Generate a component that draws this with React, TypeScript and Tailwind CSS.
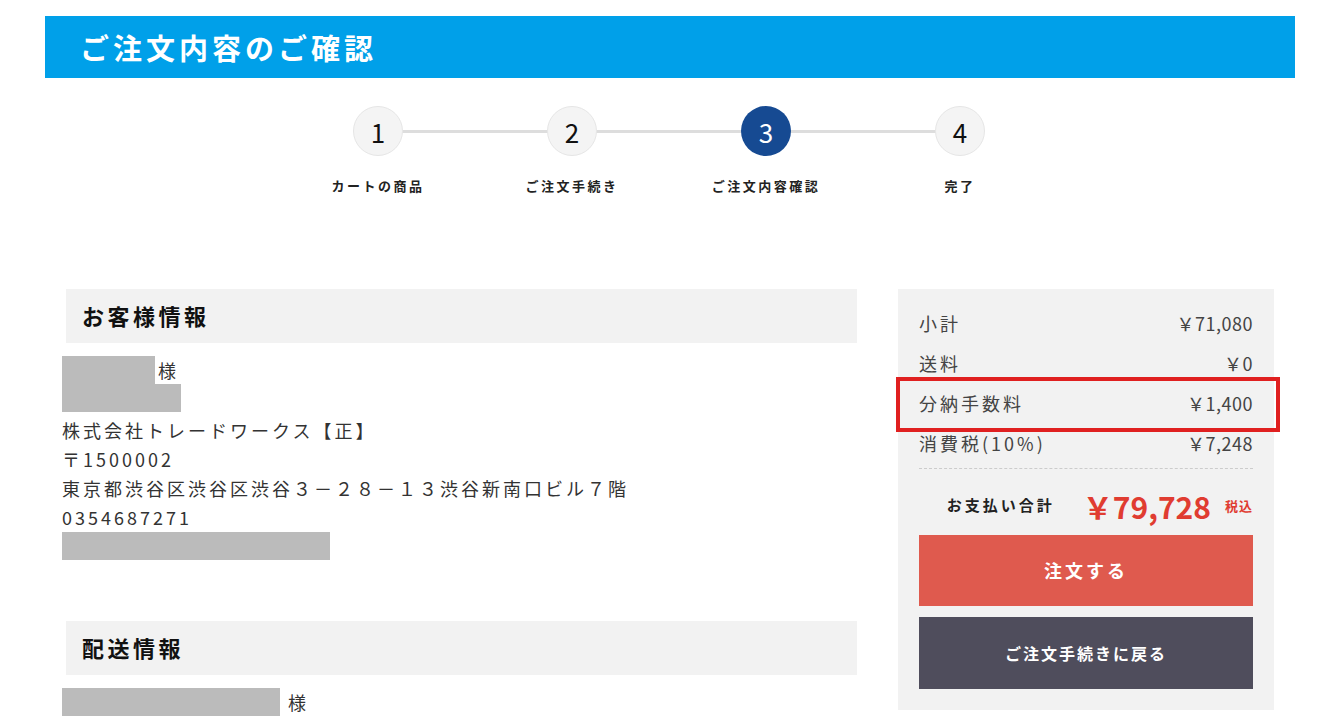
const jp = "font-['Noto_Sans_CJK_JP','Noto_Sans',sans-serif]"

const steps = [
  { n: '1', label: 'カートの商品' },
  { n: '2', label: 'ご注文手続き' },
  { n: '3', label: 'ご注文内容確認', active: true },
  { n: '4', label: '完了' },
]

const rows = [
  { label: '小計', value: '￥71,080' },
  { label: '送料', value: '￥0' },
  { label: '分納手数料', value: '￥1,400' },
  { label: '消費税(10%)', value: '￥7,248' },
]

function Redact({ w }: { w: string }) {
  return <div className={`h-[28px] shrink-0 bg-[#bbbbbb] ${w}`} />
}

function SectionHead({ title }: { title: string }) {
  return (
    <div className="ml-[4px] flex h-[54px] items-center bg-[#f2f2f2] pl-[16px]">
      <h2 className="text-[22px] font-bold tracking-[3.5px] text-[#111]">{title}</h2>
    </div>
  )
}

export default function App() {
  return (
    <div className={`min-h-screen bg-white pt-[16px] text-[#333] ${jp}`}>
      {/* Title bar */}
      <div className="mx-[45px] flex h-[62px] items-center bg-[#00a0e9] pl-[35px]">
        <h1 className="text-[29px] font-bold leading-none tracking-[4px] text-white">ご注文内容のご確認</h1>
      </div>

      {/* Stepper */}
      <div className="ml-[281px] mt-[28px] flex">
        {steps.map((s, i) => (
          <div key={s.n} className="relative flex w-[194px] flex-col items-center">
            {i < steps.length - 1 && (
              <div className="absolute left-[97px] top-[24px] h-[3px] w-[194px] bg-[#dddddd]" />
            )}
            <div
              className={`relative z-10 flex h-[50px] w-[50px] items-center justify-center rounded-full text-[26px] ${
                s.active ? 'bg-[#164a92] text-white' : 'border border-[#e6e6e6] bg-[#f4f4f4] text-[#111]'
              }`}
            >
              {s.n}
            </div>
            <p className="mt-[20px] text-[13px] font-bold tracking-[2.5px] text-[#222]">{s.label}</p>
          </div>
        ))}
      </div>

      {/* Body */}
      <div className="mt-[93px] flex">
        {/* Left column */}
        <div className="ml-[62px] w-[795px]">
          <SectionHead title="お客様情報" />
          <div className="mt-[13px] flex flex-col text-[18px] leading-[29px] tracking-[3px]">
            <div className="flex items-start">
              <Redact w="w-[93px]" />
              <span className="ml-[3px] leading-[28px]">様</span>
            </div>
            <Redact w="w-[119px]" />
            <div className="mt-[4px]">
              <p>株式会社トレードワークス【正】</p>
              <p>〒1500002</p>
              <p>東京都渋谷区渋谷区渋谷３－２８－１３渋谷新南口ビル７階</p>
              <p>0354687271</p>
            </div>
            <Redact w="w-[268px]" />
          </div>
          <div className="mt-[61px]">
            <SectionHead title="配送情報" />
          </div>
          <div className="mt-[13px] flex items-start text-[18px]">
            <Redact w="w-[218px]" />
            <span className="ml-[8px] leading-[28px]">様</span>
          </div>
        </div>

        {/* Summary */}
        <div className="relative ml-[41px] h-[421px] w-[376px] bg-[#f2f2f2] px-[21px] pt-[15px]">
          {rows.map(r => (
            <div key={r.label} className="flex h-[40px] items-center justify-between text-[18px] text-[#444]">
              <span className="tracking-[3px]">{r.label}</span>
              <span className="tracking-[0.5px]">{r.value}</span>
            </div>
          ))}
          <div className="mt-[4px] border-t border-dashed border-[#cccccc]" />
          <div className="mt-[22px] flex items-center justify-end">
            <span className="mr-[28px] text-[15px] font-bold tracking-[3px] text-[#222]">お支払い合計</span>
            <span className="text-[30px] font-bold leading-none text-[#e03c31]">￥79,728</span>
            <span className="ml-[14px] text-[13px] font-bold tracking-[1px] text-[#e03c31]">税込</span>
          </div>
          <button className="mt-[14px] flex h-[71px] w-full items-center justify-center bg-[#df5a4e] text-[18px] font-bold tracking-[3px] text-white">
            注文する
          </button>
          <button className="mt-[11px] flex h-[72px] w-full items-center justify-center bg-[#4f4d5c] text-[16px] font-bold tracking-[2px] text-white">
            ご注文手続きに戻る
          </button>

          {/* highlight */}
          <div className="pointer-events-none absolute left-[-2px] top-[88px] h-[55px] w-[384px] border-[4px] border-[#e02020]" />
        </div>
      </div>
    </div>
  )
}
